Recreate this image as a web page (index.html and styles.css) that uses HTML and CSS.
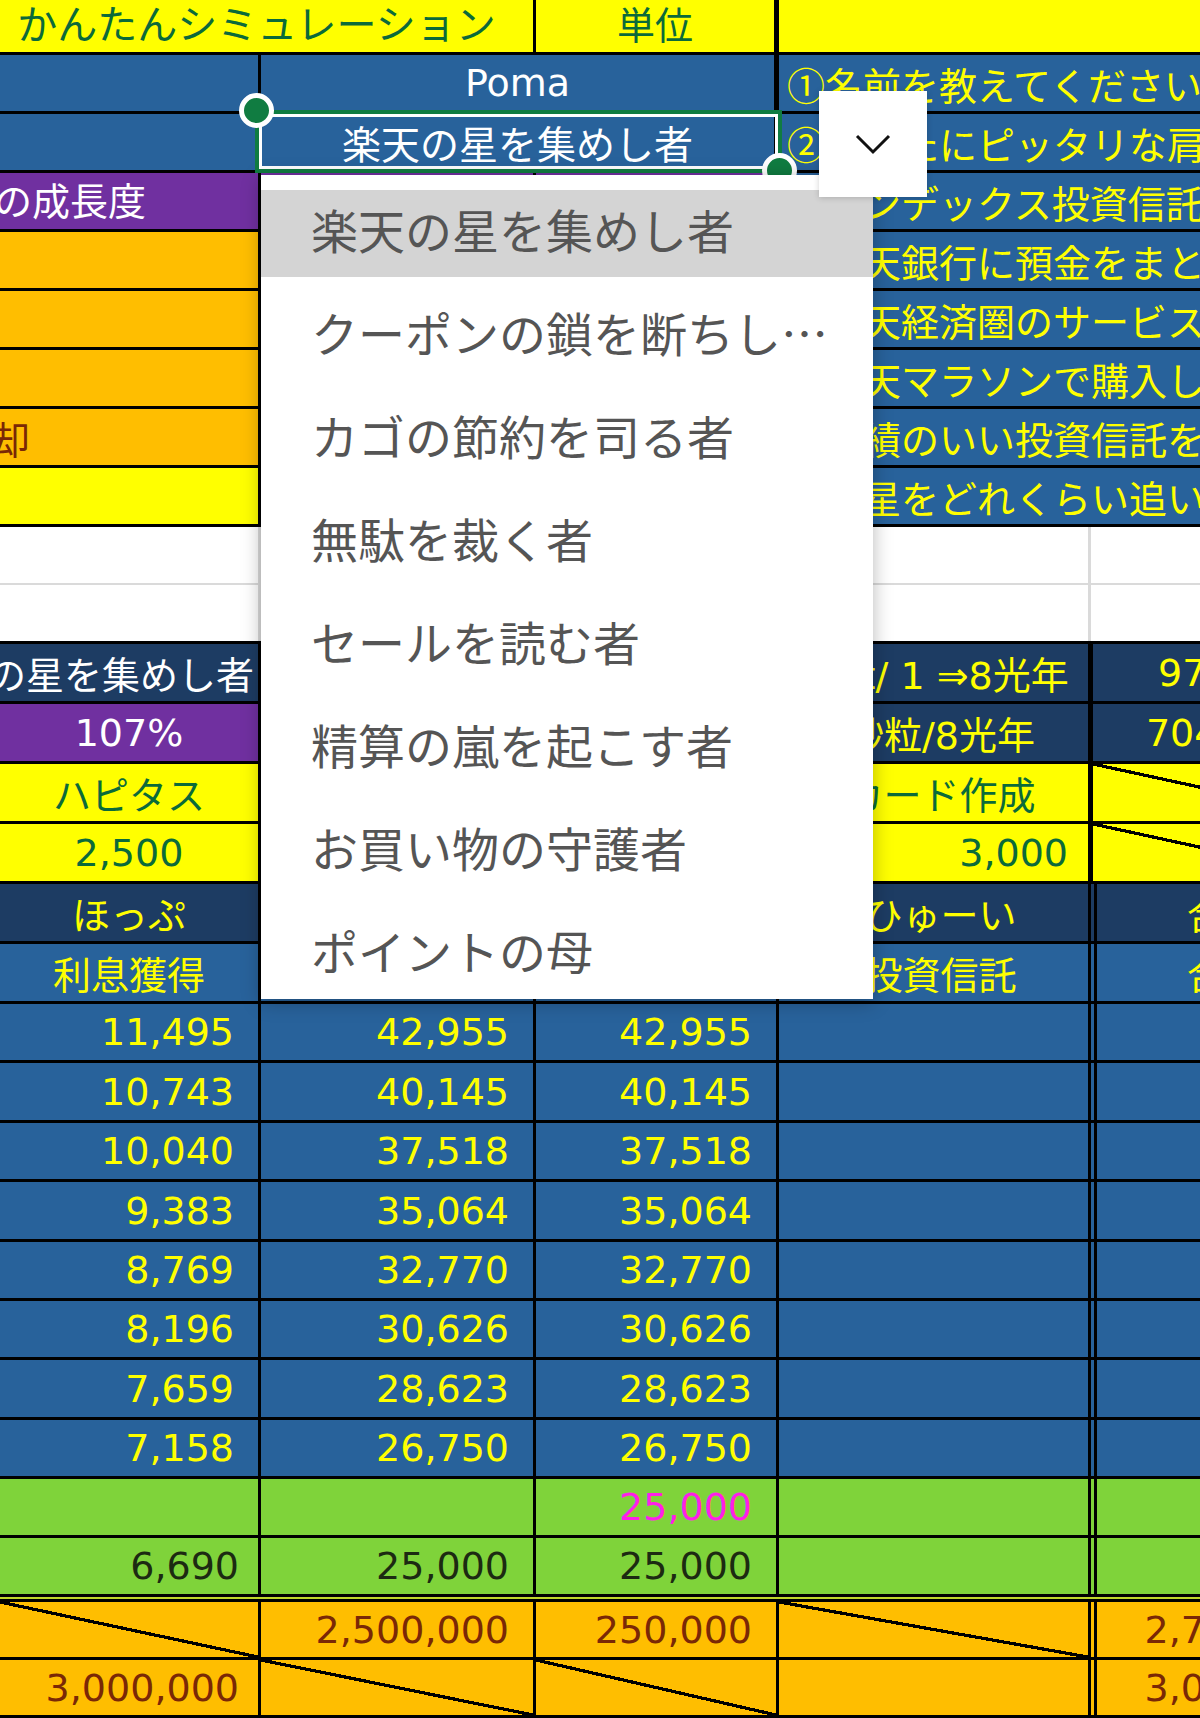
FILE: index.html
```html
<!DOCTYPE html>
<html lang="ja">
<head>
    <meta charset="UTF-8">
    <meta name="viewport" content="width=device-width, initial-scale=1.0">
    <title>かんたんシミュレーション</title>
    <link rel="stylesheet" href="styles.css">
</head>
<body>
    <div class="sheet">

        <!-- 入力エリア -->
        <div class="grid top">
            <div class="c y gr hd ctr span2">かんたんシミュレーション</div>
            <div class="c y gr ctr edge hd2">単位</div>
            <div class="c y"></div>

            <div class="c b"></div>
            <div class="c b wt ctr span2 edge">Poma</div>
            <div class="c b yl jp">①名前を教えてください</div>

            <div class="c b"></div>
            <div class="c b wt ctr span2 edge fs39">楽天の星を集めし者</div>
            <div class="c b yl jp">②あなたにピッタリな肩書きを選んでください</div>

            <div class="c p wt flush up"><span class="cut">星の成長度</span></div>
            <div class="c p"></div>
            <div class="c p"></div>
            <div class="c b yl jp">③インデックス投資信託を積み立てる</div>

            <div class="c o"></div>
            <div class="c o"></div>
            <div class="c o"></div>
            <div class="c b yl jp">④楽天銀行に預金をまとめる</div>

            <div class="c o"></div>
            <div class="c o"></div>
            <div class="c o"></div>
            <div class="c b yl jp">⑤楽天経済圏のサービスを使う</div>

            <div class="c o"></div>
            <div class="c o"></div>
            <div class="c o"></div>
            <div class="c b yl jp">⑥楽天マラソンで購入した金額</div>

            <div class="c o br flush"><span class="cut">売却</span></div>
            <div class="c o"></div>
            <div class="c o"></div>
            <div class="c b yl jp">⑦成績のいい投資信託を選ぶ</div>

            <div class="c y"></div>
            <div class="c y"></div>
            <div class="c y"></div>
            <div class="c b yl jp">⑧金星をどれくらい追いかけるか</div>
        </div>

        <!-- 空き行 -->
        <div class="grid blank">
            <div class="c w"></div><div class="c w"></div><div class="c w"></div><div class="c w"></div><div class="c w"></div>
            <div class="c w"></div><div class="c w"></div><div class="c w"></div><div class="c w"></div><div class="c w"></div>
        </div>

        <!-- 結果エリア -->
        <div class="grid mid">
            <div class="c n wt num tight">楽天の星を集めし者</div>
            <div class="c n"></div>
            <div class="c n"></div>
            <div class="c n yl ctr dctr">1pt/ 1 ⇒8光年</div>
            <div class="c n yl ctr e1">97,656</div>

            <div class="c p wt ctr">107%</div>
            <div class="c p"></div>
            <div class="c p"></div>
            <div class="c n yl ctr dctr">砂粒/8光年</div>
            <div class="c n yl ctr e1">704,000</div>

            <div class="c y gr ctr">ハピタス</div>
            <div class="c y"></div>
            <div class="c y"></div>
            <div class="c y gr ctr dctr">カード作成</div>
            <div class="c y e1 diag"></div>

            <div class="c y gr ctr">2,500</div>
            <div class="c y"></div>
            <div class="c y"></div>
            <div class="c y gr num d">3,000</div>
            <div class="c y e1 diag"></div>

            <div class="c n yl ctr">ほっぷ</div>
            <div class="c n yl ctr">すてっぷ</div>
            <div class="c n yl ctr">じゃんぷ</div>
            <div class="c n yl ctr dctr">ひゅーい</div>
            <div class="c n yl ctr e2">合計</div>

            <div class="c b yl ctr">利息獲得</div>
            <div class="c b yl ctr">ポイント</div>
            <div class="c b yl ctr">ポイント</div>
            <div class="c b yl ctr dctr">投資信託</div>
            <div class="c b yl ctr e2">合計</div>

            <div class="c b yl num">11,495</div><div class="c b yl num">42,955</div><div class="c b yl num">42,955</div><div class="c b"></div><div class="c b e2"></div>
            <div class="c b yl num">10,743</div><div class="c b yl num">40,145</div><div class="c b yl num">40,145</div><div class="c b"></div><div class="c b e2"></div>
            <div class="c b yl num">10,040</div><div class="c b yl num">37,518</div><div class="c b yl num">37,518</div><div class="c b"></div><div class="c b e2"></div>
            <div class="c b yl num">9,383</div><div class="c b yl num">35,064</div><div class="c b yl num">35,064</div><div class="c b"></div><div class="c b e2"></div>
            <div class="c b yl num">8,769</div><div class="c b yl num">32,770</div><div class="c b yl num">32,770</div><div class="c b"></div><div class="c b e2"></div>
            <div class="c b yl num">8,196</div><div class="c b yl num">30,626</div><div class="c b yl num">30,626</div><div class="c b"></div><div class="c b e2"></div>
            <div class="c b yl num">7,659</div><div class="c b yl num">28,623</div><div class="c b yl num">28,623</div><div class="c b"></div><div class="c b e2"></div>
            <div class="c b yl num">7,158</div><div class="c b yl num">26,750</div><div class="c b yl num">26,750</div><div class="c b"></div><div class="c b e2"></div>

            <div class="c g"></div><div class="c g"></div><div class="c g mg num">25,000</div><div class="c g"></div><div class="c g e2"></div>
            <div class="c g dk num a">6,690</div><div class="c g dk num">25,000</div><div class="c g dk num">25,000</div><div class="c g"></div><div class="c g e2"></div>
        </div>

        <div class="seam"></div>

        <!-- 合計エリア -->
        <div class="grid low">
            <div class="c o diag"></div>
            <div class="c o br num">2,500,000</div>
            <div class="c o br num">250,000</div>
            <div class="c o diag"></div>
            <div class="c o br num e2 e">2,750,000</div>

            <div class="c o br num a">3,000,000</div>
            <div class="c o diag"></div>
            <div class="c o diag"></div>
            <div class="c o"></div>
            <div class="c o br num e2 e">3,000,000</div>
        </div>

        <!-- 選択中のセルとリスト -->
        <div class="sel"></div>
        <div class="handle tl"></div>
        <div class="handle brh"></div>

        <div class="menu">
            <div class="item on">楽天の星を集めし者</div>
            <div class="item">クーポンの鎖を断ちし…</div>
            <div class="item">カゴの節約を司る者</div>
            <div class="item">無駄を裁く者</div>
            <div class="item">セールを読む者</div>
            <div class="item">精算の嵐を起こす者</div>
            <div class="item">お買い物の守護者</div>
            <div class="item">ポイントの母</div>
        </div>

        <div class="pick">
            <svg width="36" height="22" viewBox="0 0 36 22">
                <polyline points="2,3 18,19 34,3" fill="none" stroke="#111" stroke-width="3"/>
            </svg>
        </div>
    </div>
</body>
</html>
```

FILE: styles.css
```css
html, body {
    margin: 0;
    overflow: hidden;
}

body {
    width: 1200px;
    height: 1718px;
    background: #fff;
    font-family: "DejaVu Sans", "Noto Sans CJK JP", sans-serif;
    font-size: 38px;
}

.sheet {
    position: relative;
    width: 1356px;
}

/* grid lines are the black background showing through the gaps */
.grid {
    display: grid;
    grid-template-columns: 258px 272px 240px 309px 265px;
    gap: 3px;
    background: #000;
}

.top {
    grid-template-columns: 258px 272px 240px 1fr;
    grid-template-rows: 52px repeat(8, 56px);
    padding-bottom: 3px;
}

.blank {
    grid-template-rows: 56px 56px;
    gap: 2px 3px;
    background: #dadada;
}

.mid {
    grid-template-rows: repeat(6, 57px) 56px 57px 56px 57px 56px 56px 57px 56px 56px 56px;
    padding: 3px 0;
}

.seam {
    height: 2px;
    background: #bfd62b;
}

.low {
    grid-template-rows: 55px 55px;
    padding: 3px 0;
}

/* cells */
.c {
    display: flex;
    align-items: center;
    overflow: hidden;
    white-space: nowrap;
    padding: 0 8px;
    box-sizing: border-box;
}

.span2 { grid-column: span 2; }
.ctr { justify-content: center; }
.num { justify-content: flex-end; padding-right: 24px; }
.num.a { padding-right: 19px; }
.num.d { padding-right: 20px; }
.num.e { padding-right: 18px; }
.tight { padding-right: 4px; }
.flush { padding-left: 0; }
.up { padding-bottom: 6px; }
.dctr { padding-left: 22px; padding-right: 8px; }
.hd { font-size: 40px; padding: 0 20px 8px 0; }
.hd2 { padding-bottom: 8px; }
.fs39 { font-size: 39px; }
.jp { font-family: "Noto Sans CJK JP", sans-serif; }
.edge { border-right: 2px solid #000; }

.cut { margin-left: -44px; }
.br .cut { margin-left: -46px; }

/* single and double borders in front of the last column */
.e1 { border-left: 2px solid #000; }
.e2 {
    border-left: 3px solid transparent;
    box-shadow: inset 3px 0 0 #000;
}

.diag {
    background-image: linear-gradient(to top right,
        transparent calc(50% - 1.6px), #000 calc(50% - 1.6px),
        #000 calc(50% + 1.6px), transparent calc(50% + 1.6px));
}

/* fills */
.y { background-color: #ffff00; }
.b { background-color: #28629b; }
.n { background-color: #1d3c63; }
.p { background-color: #7030a0; }
.o { background-color: #ffbe00; }
.g { background-color: #7fd33a; }
.w { background-color: #fff; }

/* text colours */
.wt { color: #fff; }
.yl { color: #ffff00; }
.gr { color: #0b6a3a; }
.br { color: #7a2806; }
.mg { color: #ff1ee8; }
.dk { color: #1c2a12; }

/* active cell */
.sel {
    position: absolute;
    left: 255px;
    top: 110px;
    width: 527px;
    height: 63px;
    box-sizing: border-box;
    border: 4px solid #107c41;
    box-shadow: inset 0 0 0 3px #fff;
}

.handle {
    position: absolute;
    width: 25px;
    height: 25px;
    border-radius: 50%;
    background: #107c41;
    border: 5px solid #fff;
}

.handle.tl { left: 239px; top: 93px; }
.handle.brh { left: 762px; top: 153px; }

/* validation list */
.menu {
    position: absolute;
    left: 261px;
    top: 175px;
    width: 612px;
    padding: 15px 0 1px;
    display: flex;
    flex-direction: column;
    gap: 16px;
    background: #fff;
    box-shadow: 0 3px 18px rgba(0, 0, 0, 0.28);
    font-family: "Noto Sans CJK JP", sans-serif;
    font-size: 47px;
    color: #555;
}

.item {
    height: 87px;
    line-height: 77px;
    padding: 0 0 10px 50px;
    box-sizing: border-box;
    white-space: nowrap;
}

.item.on { background: #d4d4d4; }

.pick {
    position: absolute;
    left: 819px;
    top: 91px;
    width: 108px;
    height: 106px;
    background: #fff;
    box-shadow: 0 1px 6px rgba(0, 0, 0, 0.18);
    display: flex;
    align-items: center;
    justify-content: center;
}
```
